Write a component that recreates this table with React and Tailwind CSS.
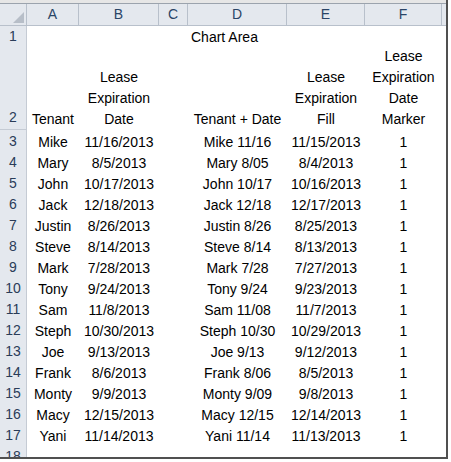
import React from "react";

const cols = "grid grid-cols-[27px_52px_80px_29px_99px_78px_77px_1fr]";

const data = [
  ["Mike", "11/16/2013", "Mike 11/16", "11/15/2013"],
  ["Mary", "8/5/2013", "Mary 8/05", "8/4/2013"],
  ["John", "10/17/2013", "John 10/17", "10/16/2013"],
  ["Jack", "12/18/2013", "Jack 12/18", "12/17/2013"],
  ["Justin", "8/26/2013", "Justin 8/26", "8/25/2013"],
  ["Steve", "8/14/2013", "Steve 8/14", "8/13/2013"],
  ["Mark", "7/28/2013", "Mark 7/28", "7/27/2013"],
  ["Tony", "9/24/2013", "Tony 9/24", "9/23/2013"],
  ["Sam", "11/8/2013", "Sam 11/08", "11/7/2013"],
  ["Steph", "10/30/2013", "Steph 10/30", "10/29/2013"],
  ["Joe", "9/13/2013", "Joe 9/13", "9/12/2013"],
  ["Frank", "8/6/2013", "Frank 8/06", "8/5/2013"],
  ["Monty", "9/9/2013", "Monty 9/09", "9/8/2013"],
  ["Macy", "12/15/2013", "Macy 12/15", "12/14/2013"],
  ["Yani", "11/14/2013", "Yani 11/14", "11/13/2013"],
];

const RowHead = ({ n }) => (
  <div className="flex items-center justify-center border-r border-b border-[#c5cbd4] bg-[#e4e8ee] pt-[1px] text-[#2a3c58]">
    {n}
  </div>
);

const Cell = ({ children }) => (
  <div className="flex items-center justify-center whitespace-nowrap pt-[2px]">{children}</div>
);

// header cell with stacked lines, bottom aligned like excel wrap text
const Stack = ({ lines }) => (
  <div className="flex flex-col items-center justify-end whitespace-nowrap leading-[21px]">
    {lines.map((l) => (
      <span key={l}>{l}</span>
    ))}
  </div>
);

export default function App() {
  return (
    <div className="w-[451px] h-[462px] bg-white overflow-hidden font-['Liberation_Sans',Arial,sans-serif] text-[14px] text-black">
      <div className="w-[448px] h-[459px] overflow-hidden border-r-2 border-b-2 border-[#505050]">
        <div className="h-[4px] bg-[#e6e6e6] border-b border-[#9ba3ad]" />

        {/* column letters */}
        <div className={`${cols} h-[21px] bg-[#e4e8ee] text-[#2a4466]`}>
          <div className="relative border-r border-b border-[#b8c0cb]">
            <svg className="absolute right-[2px] bottom-[2px]" width="11" height="11" viewBox="0 0 11 11">
              <polygon points="11,0 11,11 0,11" fill="#b7bec8" />
            </svg>
          </div>
          {["A", "B", "C", "D", "E", "F"].map((c) => (
            <div key={c} className="flex items-center justify-center border-r border-b border-[#b8c0cb]">
              {c}
            </div>
          ))}
          <div className="border-b border-[#b8c0cb]" />
        </div>

        {/* row 1 */}
        <div className={`${cols} h-[21px]`}>
          <RowHead n={1} />
          <div />
          <div />
          <div />
          <div className="flex items-center whitespace-nowrap pl-[3px] pt-[2px]">Chart Area</div>
        </div>

        {/* row 2 */}
        <div className={`${cols} h-[84px]`}>
          <div className="flex flex-col justify-end border-r border-b border-[#c5cbd4] bg-[#e4e8ee] pb-[1px] text-center leading-[21px] text-[#2a3c58]">
            2
          </div>
          <Stack lines={["Tenant"]} />
          <Stack lines={["Lease", "Expiration", "Date"]} />
          <div />
          <Stack lines={["Tenant + Date"]} />
          <Stack lines={["Lease", "Expiration", "Fill"]} />
          <Stack lines={["Lease", "Expiration", "Date", "Marker"]} />
        </div>

        {data.map((r, i) => (
          <div key={i} className={`${cols} h-[21px]`}>
            <RowHead n={i + 3} />
            <Cell>{r[0]}</Cell>
            <Cell>{r[1]}</Cell>
            <div />
            <Cell>{r[2]}</Cell>
            <Cell>{r[3]}</Cell>
            <Cell>1</Cell>
          </div>
        ))}

        <div className={`${cols} h-[21px]`}>
          <RowHead n={18} />
        </div>
      </div>
    </div>
  );
}
